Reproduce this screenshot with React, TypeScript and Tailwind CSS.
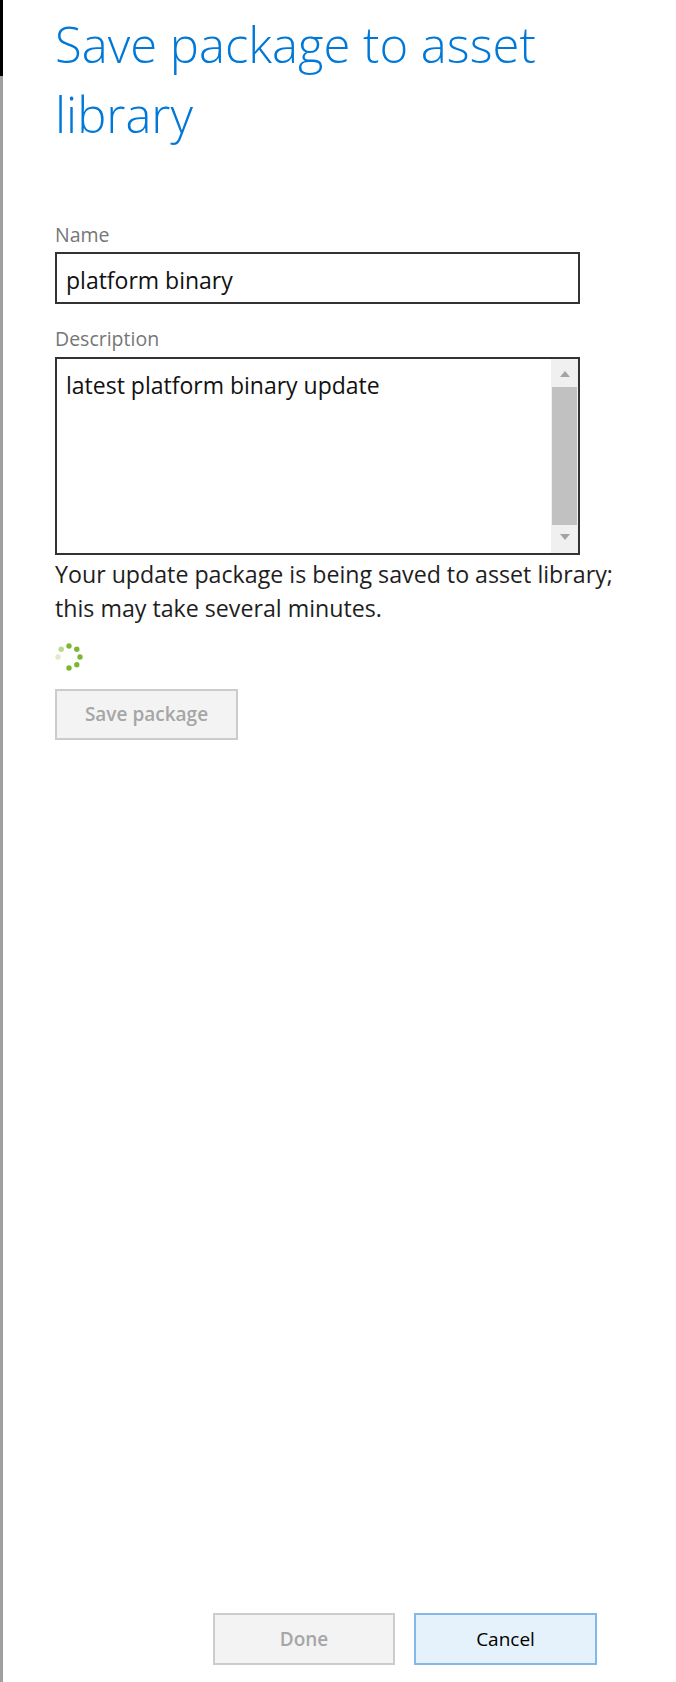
const font = "font-['Open_Sans','Noto_Sans',sans-serif]";

function Spinner() {
  const dots = [
    { cx: 15, cy: 4, fill: "#7cb82f" },
    { cx: 22.8, cy: 7.2, fill: "#7cb82f" },
    { cx: 26, cy: 15, fill: "#7cb82f" },
    { cx: 22.8, cy: 22.8, fill: "#7cb82f" },
    { cx: 15, cy: 26, fill: "#7cb82f" },
    { cx: 7.2, cy: 7.2, fill: "#b9d98f" },
    { cx: 4, cy: 15, fill: "#dcecc8" },
  ];
  return (
    <svg width="30" height="30" viewBox="0 0 30 30" className="ml-[-1px]">
      {dots.map((d, i) => (
        <circle key={`dot-${String(i)}`} cx={d.cx} cy={d.cy} r="2.7" fill={d.fill} />
      ))}
    </svg>
  );
}

function ScrollBar() {
  return (
    <div className="flex w-[27px] shrink-0 flex-col items-center bg-[#f0f0f0]">
      <div className="mt-[12px] h-0 w-0 border-x-[5px] border-b-[6px] border-x-transparent border-b-[#a3a3a3]" />
      <div className="mt-[10px] w-[25px] flex-1 bg-[#c1c1c1]" />
      <div className="mt-[9px] mb-[13px] h-0 w-0 border-x-[5px] border-t-[6px] border-x-transparent border-t-[#a3a3a3]" />
    </div>
  );
}

export default function App() {
  return (
    <div className={`flex h-[1682px] w-[676px] bg-white ${font}`}>
      <div className="flex w-[3px] shrink-0 flex-col">
        <div className="h-[76px] bg-black" />
        <div className="flex-1 bg-[#a0a0a0]" />
      </div>

      <div className="flex flex-1 flex-col pl-[52px]">
        <h1 className="pt-[9px] text-[49px] leading-[70px] font-light text-[#0078d7]">
          Save package to asset
          <br />
          library
        </h1>

        <label className="mt-[74px] mb-[5px] block h-[24px] text-[19.5px] leading-[24px] text-[#767676]">
          Name
        </label>
        <div className="h-[52px] w-[525px] border-2 border-[#333333] px-[9px] pt-[11px] text-[23px] leading-[30px] text-[#111111]">
          platform binary
        </div>

        <label className="mt-[23px] mb-[6px] block h-[24px] text-[19.5px] leading-[24px] text-[#767676]">
          Description
        </label>
        <div className="flex h-[198px] w-[525px] border-2 border-[#333333] text-[23px] leading-[30px] text-[#111111]">
          <div className="flex-1 px-[9px] pt-[11px]">latest platform binary update</div>
          <ScrollBar />
        </div>

        <p className="mt-[2px] text-[23.2px] leading-[34px] text-[#1e1e1e]">
          Your update package is being saved to asset library;
          <br />
          this may take several minutes.
        </p>

        <div className="mt-[17px]">
          <Spinner />
        </div>

        <button
          type="button"
          disabled
          className="mt-[17px] h-[51px] w-[183px] border-2 border-[#cccccc] bg-[#f3f3f3] text-[19px] font-semibold text-[#a6a6a6]"
        >
          Save package
        </button>

        <div className="mt-auto flex justify-end gap-[19px] pr-[79px] pb-[17px]">
          <button
            type="button"
            disabled
            className="h-[52px] w-[182px] border-2 border-[#cccccc] bg-[#f3f3f3] text-[19px] font-semibold text-[#a6a6a6]"
          >
            Done
          </button>
          <button
            type="button"
            className="h-[52px] w-[183px] border-2 border-[#84b8ea] bg-[#e5f1fb] text-[19px] font-medium text-black"
          >
            Cancel
          </button>
        </div>
      </div>
    </div>
  );
}
